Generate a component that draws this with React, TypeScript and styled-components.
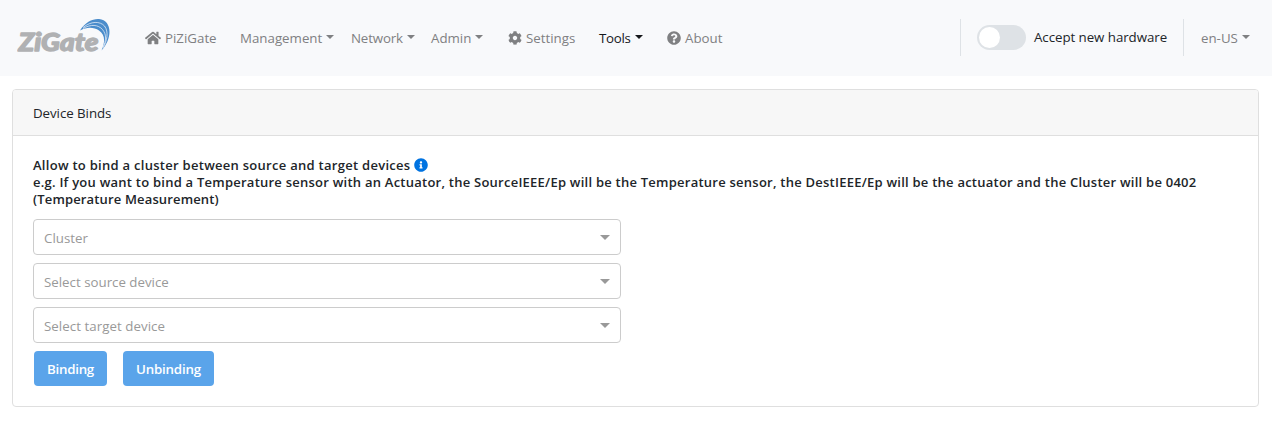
import React from "react";
import styled, { createGlobalStyle } from "styled-components";
import { FaHome, FaCog, FaQuestionCircle, FaInfoCircle } from "react-icons/fa";

const GlobalStyle = createGlobalStyle`
  *, *::before, *::after { box-sizing: border-box; }
  body {
    margin: 0;
    background: #fff;
    color: #212529;
    font-family: "Open Sans", "Noto Sans", sans-serif;
    font-size: 13.3px;
    line-height: 20px;
  }
`;

const Navbar = styled.header`
  display: flex;
  align-items: center;
  height: 76px;
  padding: 0 22px 0 17px;
  background: #f8f9fb;
`;

const Logo = styled.svg`
  display: block;
  width: 94px;
  height: 40px;
  margin-right: 34px;
  flex: none;
`;

const Nav = styled.nav`
  display: flex;
  flex: 1;
`;

const NavItem = styled.a<{ $width?: number; $active?: boolean }>`
  display: flex;
  align-items: center;
  flex: none;
  width: ${(p) => (p.$width ? `${p.$width}px` : "auto")};
  color: ${(p) => (p.$active ? "#16181b" : "#7f8082")};
  white-space: nowrap;
  svg { margin-right: 4px; flex: none; }
`;

const LanguageItem = styled(NavItem)`
  margin-left: 17px;
`;

const Label = styled.span<{ $spacing?: number }>`
  letter-spacing: ${(p) => p.$spacing ?? 0}px;
`;

const Caret = styled.span`
  width: 0;
  height: 0;
  margin: 0 0 3px 4px;
  border: 4px solid transparent;
  border-top-color: currentColor;
  border-bottom: 0;
`;

const HardwareToggle = styled.label`
  display: flex;
  align-items: center;
  width: 224px;
  height: 37px;
  margin-bottom: 1px;
  padding-left: 16px;
  border: solid #dee2e6;
  border-width: 0 1px;
  white-space: nowrap;
`;

const ToggleLabel = styled(Label)`
  padding-bottom: 2px;
`;

const Switch = styled.span`
  width: 49px;
  height: 25px;
  padding: 2px;
  margin-right: 8px;
  border-radius: 13px;
  background: #dee2e6;
  &::before {
    content: "";
    display: block;
    width: 21px;
    height: 21px;
    border-radius: 50%;
    background: #fff;
  }
`;

const Card = styled.section`
  height: 318px;
  margin: 13px 13px 0 12px;
  border: 1px solid #dfdfdf;
  border-radius: 4px;
  overflow: hidden;
`;

const CardHeader = styled.div`
  height: 46px;
  padding: 13px 20px;
  background: #f7f7f7;
  border-bottom: 1px solid #dfdfdf;
`;

const CardBody = styled.div`
  padding: 21px 20px 20px;
`;

const Help = styled.p`
  margin: 0 0 11px;
  font-weight: 600;
  font-size: 13px;
  line-height: 17px;
  white-space: nowrap;
`;

const HelpLine = styled.span`
  display: flex;
  align-items: center;
  height: 17px;
  svg { margin: -2px 0 0 4px; color: #0073e1; }
`;

const Select = styled.div`
  display: flex;
  align-items: center;
  justify-content: space-between;
  width: 588px;
  height: 36px;
  margin-bottom: 8px;
  padding: 2px 10px 0;
  border: 1px solid #ccc;
  border-radius: 4px;
  color: #999;
`;

const Arrow = styled.span`
  border: 5px solid transparent;
  border-top-color: #999;
  border-bottom: 0;
  margin-bottom: 2px;
`;

const Actions = styled.div`
  display: flex;
  gap: 16px;
  padding-left: 1px;
`;

const Button = styled.button<{ $width: number }>`
  width: ${(p) => p.$width}px;
  height: 35px;
  padding: 1px 0 0;
  border: 0;
  border-radius: 4px;
  background: #5aa4ea;
  color: #fff;
  font: 600 13.3px "Open Sans", "Noto Sans", sans-serif;
`;

function ZiGateLogo() {
  return (
    <Logo viewBox="0 0 94 40">
      <text x="1.500" y="33.300" textLength="80" lengthAdjust="spacingAndGlyphs" fontFamily="Lato, sans-serif" fontWeight="900" fontStyle="italic" fontSize="24.500" fill="#b0b1b3" stroke="#b0b1b3" strokeWidth="1.300" strokeLinejoin="round">ZiGate</text>
      <path d="M63 12.500C68 4 76 0.500 82 1C95 2 96 20 84.500 32.500C88.500 23 88 17 82 12.500C77 9 70 8.500 63 12.500Z" fill="#4a8ccb" />
      <g fill="none" stroke="#dfeaf6" strokeWidth="0.8">
        <path d="M66 9.500C74 3 83 3 87.500 8C92 14 90 23 86 30" />
        <path d="M66 10.500C74 6 81 6.500 85.500 11.500C90 17 89 23 86 29" />
      </g>
    </Logo>
  );
}

export default function App() {
  return (
    <>
      <GlobalStyle />
      <Navbar>
        <ZiGateLogo />
        <Nav>
          <NavItem $width={95}><FaHome size={16} /><Label>PiZiGate</Label></NavItem>
          <NavItem $width={111}><Label>Management</Label><Caret /></NavItem>
          <NavItem $width={80}><Label $spacing={-0.15}>Network</Label><Caret /></NavItem>
          <NavItem $width={77}><Label>Admin</Label><Caret /></NavItem>
          <NavItem $width={91}><FaCog size={14} /><Label>Settings</Label></NavItem>
          <NavItem $width={68} $active><Label $spacing={-0.3}>Tools</Label><Caret /></NavItem>
          <NavItem><FaQuestionCircle size={14} /><Label>About</Label></NavItem>
        </Nav>
        <HardwareToggle>
          <Switch />
          <ToggleLabel $spacing={-0.05}>Accept new hardware</ToggleLabel>
        </HardwareToggle>
        <LanguageItem $width={49}><Label>en-US</Label><Caret /></LanguageItem>
      </Navbar>
      <Card>
        <CardHeader><Label $spacing={-0.05}>Device Binds</Label></CardHeader>
        <CardBody>
          <Help>
            <HelpLine><Label $spacing={0.28}>Allow to bind a cluster between source and target devices</Label><FaInfoCircle size={14} /></HelpLine>
            <HelpLine><Label $spacing={0.24}>e.g. If you want to bind a Temperature sensor with an Actuator, the SourceIEEE/Ep will be the Temperature sensor, the DestIEEE/Ep will be the actuator and the Cluster will be 0402</Label></HelpLine>
            <HelpLine><Label $spacing={0.15}>(Temperature Measurement)</Label></HelpLine>
          </Help>
          <Select><Label>Cluster</Label><Arrow /></Select>
          <Select><Label>Select source device</Label><Arrow /></Select>
          <Select><Label $spacing={0.05}>Select target device</Label><Arrow /></Select>
          <Actions>
            <Button $width={73}><Label $spacing={-0.25}>Binding</Label></Button>
            <Button $width={91}><Label $spacing={-0.2}>Unbinding</Label></Button>
          </Actions>
        </CardBody>
      </Card>
    </>
  );
}
